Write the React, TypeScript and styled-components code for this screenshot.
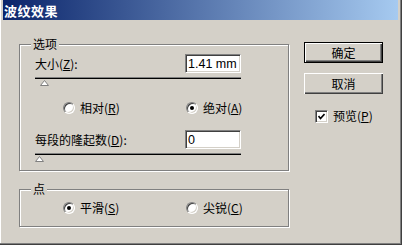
import React from "react";
import styled, { createGlobalStyle } from "styled-components";

const GlobalStyle = createGlobalStyle`
  html, body {
    margin: 0;
    padding: 0;
    background: #d4d0c8;
  }
  body {
    font-family: "Noto Sans CJK SC", "DejaVu Sans", sans-serif;
    font-size: 12px;
    color: #000;
  }
`;

const Window = styled.div`
  width: 402px;
  height: 245px;
  box-sizing: border-box;
  background: #d4d0c8;
  border-right: 1px solid #404040;
  border-bottom: 1px solid #404040;
  box-shadow: inset -1px -1px 0 #808080, inset 1px 0 0 #ffffff;
  padding: 0 3px;
  display: flex;
  flex-direction: column;
`;

const TitleBar = styled.div`
  height: 20px;
  flex: none;
  display: flex;
  align-items: center;
  padding-left: 1px;
  background: linear-gradient(to right, #0a246a, #a6caf0);
  color: #ffffff;
  font-size: 13px;
  font-weight: bold;
  letter-spacing: 0.5px;
`;

const Body = styled.div`
  display: flex;
  gap: 15px;
  padding: 17px 0 0 16px;
`;

const LeftColumn = styled.div`
  width: 270px;
  display: flex;
  flex-direction: column;
`;

const Group = styled.fieldset<{ $gap?: number }>`
  margin: ${(p) => p.$gap ?? 0}px 0 0 0;
  padding: 0;
  min-inline-size: 0;
  width: 270px;
  box-sizing: border-box;
  border: 1px solid #808080;
  box-shadow: inset 1px 1px 0 #ffffff, 1px 1px 0 #ffffff;
`;

const Legend = styled.legend`
  margin-left: 11px;
  padding: 0 2px;
  line-height: 14px;
  font-size: 12px;
  background: #d4d0c8;
`;

const GroupBody = styled.div<{ $pt: number; $pb: number }>`
  display: flex;
  flex-direction: column;
  padding: ${(p) => p.$pt}px 47px ${(p) => p.$pb}px 15px;
`;

const FieldRow = styled.div<{ $gap?: number }>`
  display: flex;
  align-items: center;
  justify-content: space-between;
  height: 19px;
  margin-top: ${(p) => p.$gap ?? 0}px;
`;

const Label = styled.span`
  line-height: 14px;
  white-space: nowrap;
`;

const Field = styled.input`
  width: 56px;
  height: 19px;
  box-sizing: border-box;
  margin: 0;
  padding: 0 2px;
  border: 1px solid;
  border-color: #808080 #ffffff #ffffff #808080;
  box-shadow: inset 1px 1px 0 #404040, inset -1px -1px 0 #d4d0c8;
  background: #ffffff;
  font-family: "Liberation Sans", Arial, sans-serif;
  font-size: 12.5px;
  color: #000;
  outline: none;
`;

const Track = styled.div`
  height: 0;
  margin-top: 4px;
  border-top: 1px solid #808080;
  border-bottom: 1px solid #000000;
`;

const ThumbBox = styled.div`
  height: 6px;
  margin-top: 1px;
  display: flex;
`;

const RadioRow = styled.div<{ $gap?: number }>`
  display: grid;
  grid-template-columns: 123px auto;
  padding-left: 28px;
  height: 12px;
  align-items: center;
  margin-top: ${(p) => p.$gap ?? 0}px;
`;

const Option = styled.label`
  display: flex;
  align-items: center;
  gap: 5px;
  line-height: 14px;
  white-space: nowrap;
`;

const RadioCircle = styled.span<{ $on?: boolean }>`
  width: 12px;
  height: 12px;
  box-sizing: border-box;
  border-radius: 50%;
  border: 1px solid;
  border-color: #808080 #ffffff #ffffff #808080;
  background: #ffffff;
  box-shadow: inset 1px 1px 0 #404040, inset -1px -1px 0 #d4d0c8;
  display: flex;
  align-items: center;
  justify-content: center;
  flex: none;

  &::after {
    content: "";
    width: 4px;
    height: 4px;
    border-radius: 50%;
    background: ${(p) => (p.$on ? "#000" : "transparent")};
  }
`;

const RightColumn = styled.div`
  display: flex;
  flex-direction: column;
  padding-top: 5px;
`;

const Button = styled.button<{ $default?: boolean; $gap?: number }>`
  width: 79px;
  height: 21px;
  box-sizing: border-box;
  margin: ${(p) => p.$gap ?? 0}px 0 0 0;
  padding: 0;
  background: #d4d0c8;
  border: ${(p) => (p.$default ? "1px solid #000" : "none")};
  box-shadow: inset 1px 1px 0 #ffffff, inset -1px -1px 0 #404040,
    inset -2px -2px 0 #808080;
  font-family: "Noto Sans CJK SC", sans-serif;
  font-size: 12px;
  line-height: 14px;
  color: #000;
`;

const CheckRow = styled.label`
  display: flex;
  align-items: center;
  gap: 5px;
  margin: 15px 0 0 11px;
  line-height: 14px;
`;

const CheckBox = styled.span`
  width: 13px;
  height: 13px;
  box-sizing: border-box;
  border: 1px solid;
  border-color: #808080 #ffffff #ffffff #808080;
  background: #ffffff;
  box-shadow: inset 1px 1px 0 #404040, inset -1px -1px 0 #d4d0c8;
  display: flex;
  align-items: center;
  justify-content: center;
`;

function Thumb({ offset }: { offset: number }) {
  return (
    <ThumbBox>
      <svg width="9" height="6" style={{ marginLeft: offset }}>
        <polygon points="0.5,5.5 4.5,0.5 8.5,5.5" fill="#ffffff" stroke="#808080" />
      </svg>
    </ThumbBox>
  );
}

function Radio({ on, children }: { on?: boolean; children: React.ReactNode }) {
  return (
    <Option>
      <RadioCircle $on={on} />
      <span>{children}</span>
    </Option>
  );
}

export default function App() {
  return (
    <>
      <GlobalStyle />
      <Window>
        <TitleBar>波纹效果</TitleBar>
        <Body>
          <LeftColumn>
            <Group>
              <Legend>选项</Legend>
              <GroupBody $pt={3} $pb={8}>
                <FieldRow>
                  <Label>
                    大小(<u>Z</u>):
                  </Label>
                  <Field readOnly value="1.41 mm" />
                </FieldRow>
                <Track />
                <Thumb offset={5} />
                <RadioRow $gap={15}>
                  <Radio>
                    相对(<u>R</u>)
                  </Radio>
                  <Radio on>
                    绝对(<u>A</u>)
                  </Radio>
                </RadioRow>
                <FieldRow $gap={17}>
                  <Label>
                    每段的隆起数(<u>D</u>):
                  </Label>
                  <Field readOnly value="0" />
                </FieldRow>
                <Track />
                <Thumb offset={0} />
              </GroupBody>
            </Group>
            <Group $gap={11}>
              <Legend>点</Legend>
              <GroupBody $pt={5} $pb={13}>
                <RadioRow>
                  <Radio on>
                    平滑(<u>S</u>)
                  </Radio>
                  <Radio>
                    尖锐(<u>C</u>)
                  </Radio>
                </RadioRow>
              </GroupBody>
            </Group>
          </LeftColumn>
          <RightColumn>
            <Button $default>确定</Button>
            <Button $gap={10}>取消</Button>
            <CheckRow>
              <CheckBox>
                <svg width="7" height="7">
                  <polyline points="0.5,3 2.5,5.5 6.5,1" fill="none" stroke="#000" strokeWidth="1.6" />
                </svg>
              </CheckBox>
              <span>
                预览(<u>P</u>)
              </span>
            </CheckRow>
          </RightColumn>
        </Body>
      </Window>
    </>
  );
}
